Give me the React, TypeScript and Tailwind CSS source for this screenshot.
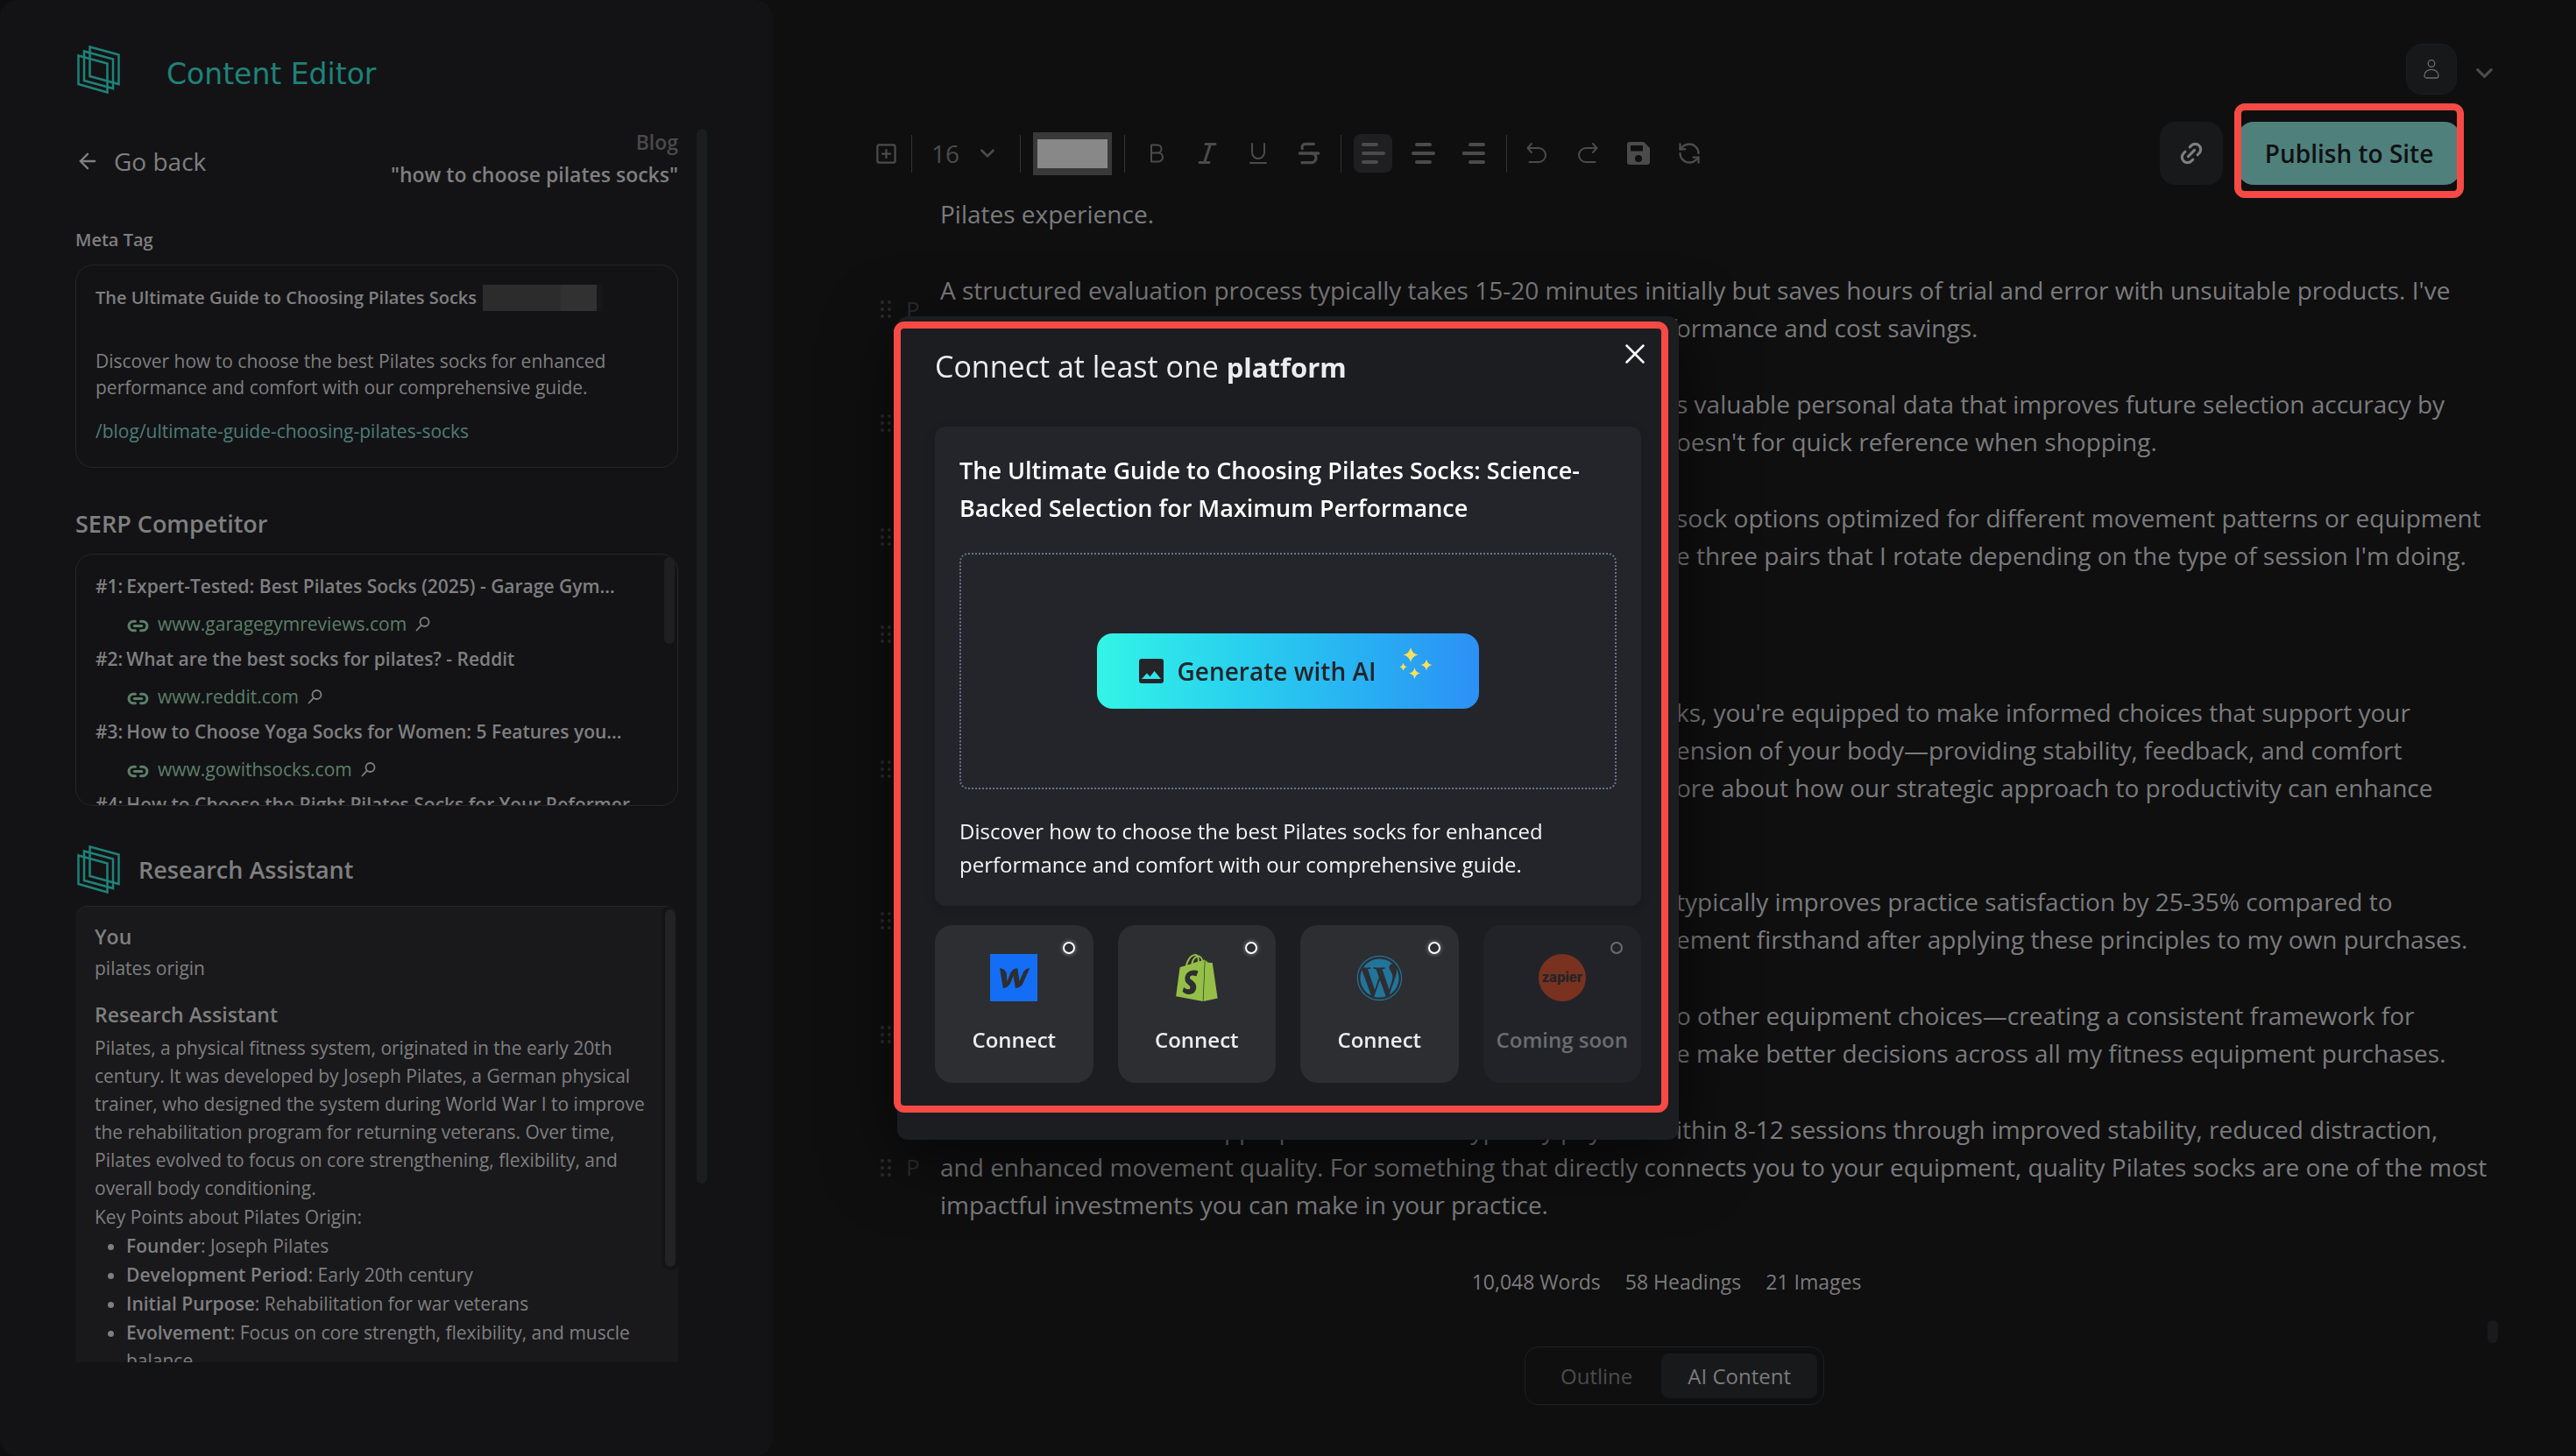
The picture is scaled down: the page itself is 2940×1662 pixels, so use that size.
import React from "react";
import { ArrowLeft, ChevronDown, Link2, RefreshCcw, SquarePlus, Strikethrough } from "lucide-react";
import { FaWordpress } from "react-icons/fa";
import { SiShopify } from "react-icons/si";

type Competitor = { title: string; site: string };
type Line = { lead?: string; tail: string };
type Block = { kind: "text"; lines: Line[] } | { kind: "heading"; text: string };

const competitors: Competitor[] = [
  { title: "Expert-Tested: Best Pilates Socks (2025) - Garage Gym...", site: "www.garagegymreviews.com" },
  { title: "What are the best socks for pilates? - Reddit", site: "www.reddit.com" },
  { title: "How to Choose Yoga Socks for Women: 5 Features you...", site: "www.gowithsocks.com" },
  { title: "How to Choose the Right Pilates Socks for Your Reformer", site: "" },
];

const keyPoints = [
  ["Founder", "Joseph Pilates"],
  ["Development Period", "Early 20th century"],
  ["Initial Purpose", "Rehabilitation for war veterans"],
  ["Evolvement", "Focus on core strength, flexibility, and muscle balance"],
];

const blocks: Block[] = [
  {
    kind: "text",
    lines: [
      {
        tail: "A structured evaluation process typically takes 15-20 minutes initially but saves hours of trial and error with unsuitable products. I've",
      },
      { lead: "found the time pays for itself through better perf", tail: "ormance and cost savings." },
    ],
  },
  {
    kind: "text",
    lines: [
      { lead: "Keeping a record of each pair build", tail: "s valuable personal data that improves future selection accuracy by" },
      { lead: "noting what works and what d", tail: "oesn't for quick reference when shopping." },
    ],
  },
  {
    kind: "text",
    lines: [
      { lead: "Consider keeping several", tail: "sock options optimized for different movement patterns or equipment" },
      { lead: "types. I hav", tail: "e three pairs that I rotate depending on the type of session I'm doing." },
    ],
  },
  { kind: "heading", text: "Conclusion" },
  {
    kind: "text",
    lines: [
      { lead: "With a clear view of Pilates soc", tail: "ks, you're equipped to make informed choices that support your" },
      { lead: "practice. Good socks become an ext", tail: "ension of your body—providing stability, feedback, and comfort" },
      { lead: "in each session. Learn m", tail: "ore about how our strategic approach to productivity can enhance" },
      { tail: "your routine." },
    ],
  },
  {
    kind: "text",
    lines: [
      { lead: "Choosing socks with care", tail: "typically improves practice satisfaction by 25-35% compared to" },
      { lead: "guessing. I noticed this improv", tail: "ement firsthand after applying these principles to my own purchases." },
    ],
  },
  {
    kind: "text",
    lines: [
      { lead: "The same method applies t", tail: "o other equipment choices—creating a consistent framework for" },
      { lead: "decisions. It has helped m", tail: "e make better decisions across all my fitness equipment purchases." },
    ],
  },
  {
    kind: "text",
    lines: [
      {
        lead: "The investment in appropriate footwear typically pays off w",
        tail: "ithin 8-12 sessions through improved stability, reduced distraction,",
      },
      {
        tail: "and enhanced movement quality. For something that directly connects you to your equipment, quality Pilates socks are one of the most",
      },
      { tail: "impactful investments you can make in your practice." },
    ],
  },
];

function BrandMark() {
  return (
    <svg viewBox="0 0 52 55" className="h-[55px] w-[52px] shrink-0 fill-none stroke-[#1f8278] stroke-[2.5]" aria-hidden="true">
      <path d="M16.500 1.500 49.500 10.500v33.500L16.500 35z" />
      <path d="M10 6.500 43 15.500v33.500L10 40z" />
      <path d="M3.500 11.500 36.500 20.500v33L3.500 44z" />
    </svg>
  );
}

function Magnifier() {
  return (
    <svg viewBox="0 0 17 17" className="size-[17px] fill-none" stroke="currentColor" strokeWidth="1.800" strokeLinecap="round" aria-hidden="true">
      <circle cx="10.500" cy="6" r="5" />
      <path d="M7 9.700 1.500 15.500" />
    </svg>
  );
}

function GripDots() {
  return (
    <svg viewBox="0 0 12 20" className="h-5 w-3 fill-[#2c2c2e]" aria-hidden="true">
      {[2, 10].map((x) => [2, 10, 18].map((y) => <circle key={`${x}-${y}`} cx={x} cy={y} r="2" />))}
    </svg>
  );
}

function ToolButton({ label, active, children }: { label: string; active?: boolean; children: React.ReactNode }) {
  return (
    <button
      type="button"
      aria-label={label}
      className={`flex size-11 shrink-0 items-center justify-center rounded-lg text-[#4b4b4c] ${active ? "bg-[#1f1f21]" : ""}`}
    >
      {children}
    </button>
  );
}

function ToolIcon({ d, width = 3 }: { d: string; width?: number }) {
  return (
    <svg viewBox="0 0 28 28" className="size-7 fill-none" stroke="currentColor" strokeWidth={width} strokeLinecap="round" strokeLinejoin="round" aria-hidden="true">
      <path d={d} />
    </svg>
  );
}

function Divider() {
  return <span className="h-[43px] w-px shrink-0 bg-[#333334]" />;
}

function Sidebar() {
  return (
    <aside className="flex w-[30%] shrink-0 flex-col rounded-[20px] bg-[#131315] pt-[52px] pl-[86px] text-[#7f7f80]">
      <header className="flex items-center gap-[52px]">
        <BrandMark />
        <h1 className="pt-2.5 font-['DejaVu_Sans',sans-serif] text-[33px] leading-10 text-[#1f8278]">Content Editor</h1>
      </header>

      <div className="mt-9 flex">
        <div className="min-w-0 flex-1">
          <div className="flex items-center justify-between">
            <a href="#back" className="flex items-center gap-4 pt-1.5 text-[28px] leading-[38px]">
              <ArrowLeft className="size-7" strokeWidth={2} />
              Go back
            </a>
            <div className="pt-px text-right text-[23px] leading-[37px] font-semibold">
              <p className="text-[#4a4a4b]">Blog</p>
              <p>"how to choose pilates socks"</p>
            </div>
          </div>

          <h2 className="mt-[42px] text-xl leading-7 font-semibold">Meta Tag</h2>
          <section className="mt-3.5 rounded-[20px] border border-[#262628] px-[22px] pt-[22px] pb-[26px]">
            <div className="flex items-center gap-[7px] text-xl leading-[30px] font-semibold">
              <h3>The Ultimate Guide to Choosing Pilates Socks</h3>
              <span className="flex h-[30px] w-[137px]">
                <span className="w-[89px] bg-[#2c2c2d]" />
                <span className="w-[41px] bg-[#313132]" />
                <span className="w-[7px] bg-[#17171a]" />
              </span>
            </div>
            <p className="mt-[42px] max-w-[600px] text-[21px] leading-[30px]">
              Discover how to choose the best Pilates socks for enhanced performance and comfort with our comprehensive guide.
            </p>
            <a href="#slug" className="mt-5 block text-[21px] leading-[30px] text-[#4c7d77]">
              /blog/ultimate-guide-choosing-pilates-socks
            </a>
          </section>

          <h2 className="mt-[46px] text-[27px] leading-9 font-semibold">SERP Competitor</h2>
          <section className="relative mt-4 h-[288px] overflow-hidden rounded-[20px] border border-[#262628] px-[22px] pt-[18px]">
            <ol>
              {competitors.map((c, i) => (
                <li key={c.title}>
                  <p className="flex gap-1 text-[21px] leading-9 font-semibold whitespace-nowrap">
                    <span>#{i + 1}:</span>
                    <span>{c.title}</span>
                  </p>
                  {c.site && (
                    <p className="mt-1.5 mb-0.5 flex items-center gap-2.5 pl-9 text-[21px] leading-[39px]">
                      <Link2 className="mt-1 size-[25px] text-[#5b8069]" strokeWidth={3} />
                      <a href="#site" className="text-[#5b7f68]">{c.site}</a>
                      <Magnifier />
                    </p>
                  )}
                </li>
              ))}
            </ol>
            <span className="absolute top-[3px] right-[3px] h-[99px] w-3 rounded-full bg-[#1f1f21]" />
          </section>

          <div className="mt-[45px] flex items-center gap-5">
            <BrandMark />
            <h2 className="text-[27px] leading-9 font-semibold">Research Assistant</h2>
          </div>
          <section className="relative mt-3.5 h-[521px] overflow-hidden rounded-t-[14px] border-t border-[#262628] bg-[#19191b] pt-[18px] pr-7 pl-[22px] text-[21px] leading-8">
            <h3 className="text-[23px] font-semibold">You</h3>
            <p className="mt-1">pilates origin</p>
            <h3 className="mt-[21px] text-[23px] font-semibold">Research Assistant</h3>
            <p className="mt-1.5">
              Pilates, a physical fitness system, originated in the early 20th century. It was developed by Joseph Pilates, a German
              physical trainer, who designed the system during World War I to improve the rehabilitation program for returning
              veterans. Over time, Pilates evolved to focus on core strengthening, flexibility, and overall body conditioning.
            </p>
            <p className="mt-px">Key Points about Pilates Origin:</p>
            <ul className="mt-px flex list-disc flex-col gap-px pl-9">
              {keyPoints.map(([name, value]) => (
                <li key={name}>
                  <strong className="font-semibold">{name}</strong>: {value}
                </li>
              ))}
            </ul>
            <span className="absolute top-[3px] right-[3px] h-[408px] w-3 rounded-full bg-[#232325] outline-4 outline-[#141416]" />
          </section>
        </div>
        <span className="mt-1 mr-[75px] ml-[21px] h-[1204px] w-3 rounded-full bg-[#1c1d1f]" />
      </div>
    </aside>
  );
}

function Toolbar() {
  return (
    <div className="flex items-center justify-between pl-[107px]">
      <div className="flex items-center gap-3.5" role="toolbar" aria-label="Formatting">
        <div className="flex items-center gap-[7px]">
          <ToolButton label="Add block">
            <SquarePlus className="size-[27px]" strokeWidth={2} />
          </ToolButton>
          <Divider />
        </div>
        <label className="flex w-[95px] items-center justify-between pr-2.5 pl-2 text-[#4b4b4c]">
          <span className="sr-only">Font size</span>
          <select className="w-9 appearance-none bg-transparent text-[28px] leading-9" defaultValue="16">
            <option>16</option>
          </select>
          <ChevronDown className="size-[26px]" strokeWidth={2.5} />
        </label>
        <Divider />
        <input
          type="color"
          aria-label="Text colour"
          defaultValue="#888888"
          className="h-[49px] w-[90px] appearance-none border-0 bg-[#393939] px-[5px] py-2 [&::-webkit-color-swatch]:rounded-none [&::-webkit-color-swatch]:border-0 [&::-webkit-color-swatch-wrapper]:p-0"
        />
        <Divider />
        <ToolButton label="Bold"><ToolIcon width={2} d="M8 4.500h7a4.500 4.500 0 0 1 0 9H8zm0 9h8a5 5 0 0 1 0 10H8z" /></ToolButton>
        <ToolButton label="Italic"><ToolIcon width={3} d="M12 3.500h11M5 24.500h11M17.500 3.500l-7 21" /></ToolButton>
        <ToolButton label="Underline"><ToolIcon width={2} d="M7 3v10a7 7 0 0 0 14 0V3M5 25h18" /></ToolButton>
        <ToolButton label="Strikethrough"><Strikethrough className="size-8" strokeWidth={2.5} /></ToolButton>
        <Divider />
        <ToolButton label="Align left" active><ToolIcon width={4} d="M3 4h15M3 14h23M3 24h15" /></ToolButton>
        <ToolButton label="Align centre"><ToolIcon width={4} d="M6 4h15M2 14h23M6 24h15" /></ToolButton>
        <ToolButton label="Align right"><ToolIcon width={4} d="M9 4h15M1.500 14H24M9 24h15" /></ToolButton>
        <Divider />
        <div className="-ml-0.5 flex items-center gap-3.5">
          <ToolButton label="Undo"><ToolIcon width={2} d="M8 3 3.500 8 8 13M3.500 8H16a8 8 0 0 1 0 16H5.500" /></ToolButton>
          <ToolButton label="Redo"><ToolIcon width={2} d="m20 3 4.500 5-4.500 5M24.500 8H12a8 8 0 0 0 0 16h10.500" /></ToolButton>
          <ToolButton label="Save">
            <svg viewBox="0 0 26 26" className="size-[26px] fill-current" aria-hidden="true">
              <path fillRule="evenodd" d="M3 0h16l7 7v16a3 3 0 0 1-3 3H3a3 3 0 0 1-3-3V3a3 3 0 0 1 3-3zm1 4v6.500h14V4zm9 11a4 4 0 1 0 0 8 4 4 0 0 0 0-8z" />
            </svg>
          </ToolButton>
          <ToolButton label="Regenerate"><RefreshCcw className="size-7" strokeWidth={2} /></ToolButton>
        </div>
      </div>

      <div className="flex items-center gap-[17px]">
        <button type="button" aria-label="Copy link" className="flex size-[72px] items-center justify-center rounded-[18px] bg-[#18191b] text-[#7f7f80]">
          <Link2 className="size-[30px] -rotate-45" strokeWidth={2.5} />
        </button>
        <div className="relative">
          <button type="button" className="h-[72px] w-[254px] rounded-[18px] bg-[#4f807c] text-[28px] leading-9 font-semibold text-[#101113]">
            Publish to Site
          </button>
          <span className="pointer-events-none absolute -inset-x-1 -top-[21px] -bottom-[15px] rounded-xl border-8 border-[#f84a45]" />
        </div>
      </div>
    </div>
  );
}

function Article() {
  return (
    <article className="mt-3 flex flex-col gap-11 text-[28px] leading-[43px] text-[#7b7b7c]">
      <p className="pl-[191px]">Pilates experience.</p>
      {blocks.map((block, i) => (
        <div key={i} className="flex items-center pl-[123px]">
          <div className="flex w-[68px] shrink-0 items-center gap-[17px] text-[26px] text-[#2c2c2e]">
            <GripDots />
            {block.kind === "text" ? <span>P</span> : null}
          </div>
          {block.kind === "heading" ? (
            <h2 className="text-[36px] leading-[48px] font-semibold">{block.text}</h2>
          ) : (
            <div className="whitespace-nowrap">
              {block.lines.map((line) => (
                <p key={line.tail}>
                  {line.lead ? <span className="inline-block w-[840px] text-right">{line.lead}</span> : null}
                  {line.tail}
                </p>
              ))}
            </div>
          )}
        </div>
      ))}
    </article>
  );
}

function Editor() {
  return (
    <main className="relative flex min-w-0 flex-1 flex-col pt-[50px] pr-[132px]">
      <div className="mr-[-43px] flex items-center justify-end gap-4">
        <button type="button" aria-label="Account" className="flex size-[58px] items-center justify-center rounded-[18px] border border-[#1c1d1e] bg-[#17181a]">
          <svg viewBox="0 0 18 22" className="h-[22px] w-[18px] fill-none stroke-[#6c6c6d] stroke-[1.3]" aria-hidden="true">
            <circle cx="9" cy="4.500" r="3.800" />
            <path d="M1 18.500C1 14 4.500 11.300 9 11.300s8 2.700 8 7.200c0 1.700-1 2.500-2.500 2.500h-11C2 21 1 20.200 1 18.500z" />
          </svg>
        </button>
        <button type="button" aria-label="Account menu" className="pt-2 text-[#4b4b4c]">
          <ChevronDown className="size-[31px]" strokeWidth={2.5} />
        </button>
      </div>
      <div className="mt-[31px]">
        <Toolbar />
      </div>
      <Article />
      <p className="mt-[50px] mr-[-132px] flex justify-center gap-7 pr-[18px] text-[23px] leading-8 text-[#7b7b7c]">
        <span>10,048 Words</span>
        <span>58 Headings</span>
        <span>21 Images</span>
      </p>
      <div className="mt-[58px] mr-[-132px] flex justify-center">
        <div className="flex rounded-2xl border border-[#1f2022] p-[7px] text-2xl leading-[51px]" role="tablist">
          <button type="button" role="tab" aria-selected="false" className="px-[33px] text-[#4b4b4c]">Outline</button>
          <button type="button" role="tab" aria-selected="true" className="rounded-lg bg-[#18191b] px-[30px] text-[#7b7b7c]">AI Content</button>
        </div>
      </div>
      <span className="absolute top-[1507px] right-[89px] h-[26px] w-3 rounded-full bg-[#1a1a1c]" />
    </main>
  );
}

function WebflowLogo() {
  return (
    <svg viewBox="0 0 54 54" className="size-[54px]" aria-hidden="true">
      <path fill="#146ef5" d="M0 0h54v54H0z" />
      <path
        fill="#2d2e32"
        transform="translate(2 3.500) scale(2)"
        d="M17.500 9.800s-1.300 3-1.700 4c-.06-.5-1.150-7.400-1.150-7.400-2.400 0-3.700 1.700-4.300 3.450 0 0-1.500 3.900-1.650 4.250 0-.34-.25-4.200-.25-4.200C8.300 7.660 6.100 6.400 4.500 6.400l1.900 11.300c2.500-.01 3.800-1.700 4.500-3.400 0 0 1.350-3.500 1.400-3.700.01.16 1.150 7.100 1.150 7.100 2.500 0 3.800-1.560 4.500-3.200l3.700-8.100c-2.500 0-3.450 1.700-4.150 3.400z"
      />
    </svg>
  );
}

function ZapierLogo() {
  return (
    <span className="flex size-[54px] items-center justify-center rounded-full bg-[#793220] pb-0.5 font-['Inter',sans-serif] text-[15px] leading-none font-extrabold text-[#232428]">
      zapier
    </span>
  );
}

const platforms = [
  { name: "Webflow", logo: <WebflowLogo />, ready: true },
  { name: "Shopify", logo: <SiShopify className="size-[54px] text-[#95bf47]" />, ready: true },
  { name: "WordPress", logo: <FaWordpress className="size-[53px] text-[#21759b]" />, ready: true },
  { name: "Zapier", logo: <ZapierLogo />, ready: false },
];

function ConnectDialog() {
  return (
    <div className="pointer-events-none fixed inset-0 flex items-center justify-center">
      <div
        role="dialog"
        aria-labelledby="connect-title"
        className="pointer-events-auto relative w-[892px] rounded-xl bg-[#1c1d21] px-[43px] pt-[34px] pb-[65px] shadow-[0_20px_80px_rgba(0,0,0,0.6)]"
      >
        <h2 id="connect-title" className="text-[34px] leading-[46px] text-[#ececed]">
          Connect at least one <b className="text-[31px] leading-none font-bold">platform</b>
        </h2>
        <button type="button" aria-label="Close" className="absolute top-[29px] right-9 text-white">
          <svg viewBox="0 0 28 28" className="size-7 fill-none stroke-current stroke-[2.5]" strokeLinecap="round" aria-hidden="true">
            <path d="m4.500 4.500 19 19M23.500 4.500l-19 19" />
          </svg>
        </button>

        <section className="mt-[46px] rounded-xl bg-[#24252a] p-7 shadow-[0_4px_12px_rgba(0,0,0,0.15)]">
          <h3 className="text-[27px] leading-[43px] font-semibold text-white">
            The Ultimate Guide to Choosing Pilates Socks: Science-Backed Selection for Maximum Performance
          </h3>
          <div className="mt-[30px] flex h-[270px] items-center justify-center rounded-[10px] border-2 border-dotted border-[#64748b]">
            <button
              type="button"
              className="flex h-[86px] items-center rounded-[18px] bg-linear-to-r from-[#33f5e6] to-[#2c90f5] pr-[53px] pl-12 text-[28px] leading-9 font-semibold text-[#24252a]"
            >
              <svg viewBox="0 0 28 28" className="mr-[15px] size-7" aria-hidden="true">
                <path fill="#24252a" fillRule="evenodd" d="M3 0h22a3 3 0 0 1 3 3v22a3 3 0 0 1-3 3H3a3 3 0 0 1-3-3V3a3 3 0 0 1 3-3zm0 23h22l-7.500-9-5 6.500-3.500-4z" />
              </svg>
              Generate with AI
              <svg viewBox="0 0 38 36" className="mb-[18px] ml-[26px] h-9 w-[38px] fill-[#fde05a]" aria-hidden="true">
                <path d="M13 0q1.500 7 8.500 8.500Q14.500 10 13 17 11.500 10 4.500 8.500 11.500 7 13 0z" />
                <path d="M31 13.500q1 5.500 6.500 6.500-5.500 1-6.500 6.500-1-5.500-6.500-6.500 5.500-1 6.500-6.500z" />
                <path d="M17.500 23q1 5.500 6.500 6.500-5.500 1-6.500 6.500-1-5.500-6.500-6.500 5.500-1 6.500-6.500z" />
                <path d="M4.500 17.500q.7 4 4.500 4.700-3.800.7-4.500 4.700-.7-4-4.500-4.700 3.800-.7 4.500-4.700z" />
              </svg>
            </button>
          </div>
          <p className="mt-[29px] max-w-[700px] text-2xl leading-[38px] text-[#f4f4f5]">
            Discover how to choose the best Pilates socks for enhanced performance and comfort with our comprehensive guide.
          </p>
        </section>

        <div className="mt-[22px] grid grid-cols-4 gap-7">
          {platforms.map((p) => (
            <button
              key={p.name}
              type="button"
              disabled={!p.ready}
              aria-label={p.ready ? `Connect ${p.name}` : `${p.name} coming soon`}
              className={`relative flex h-[180px] flex-col items-center rounded-[20px] pt-[33px] ${p.ready ? "bg-[#2d2e32] text-[#ececed]" : "bg-[#222328] text-[#6b6c70]"}`}
            >
              <span className="flex size-[54px] items-center justify-center">{p.logo}</span>
              <span className="mt-7 text-2xl leading-8 font-semibold whitespace-nowrap">{p.ready ? "Connect" : "Coming soon"}</span>
              <span
                className={`absolute top-[19px] right-[21px] size-3.5 rounded-full border-2 ${p.ready ? "border-white shadow-[0_0_5px_rgba(255,255,255,0.5)]" : "border-[#6b6c70]"}`}
              />
            </button>
          ))}
        </div>

        <span className="pointer-events-none absolute top-1.5 right-3 bottom-[31px] -left-1 rounded-xl border-8 border-[#f84a45]" />
      </div>
    </div>
  );
}

export default function App() {
  return (
    <div className="flex min-h-screen bg-[#0f0f10] font-['Open_Sans',sans-serif]">
      <Sidebar />
      <Editor />
      <ConnectDialog />
    </div>
  );
}
